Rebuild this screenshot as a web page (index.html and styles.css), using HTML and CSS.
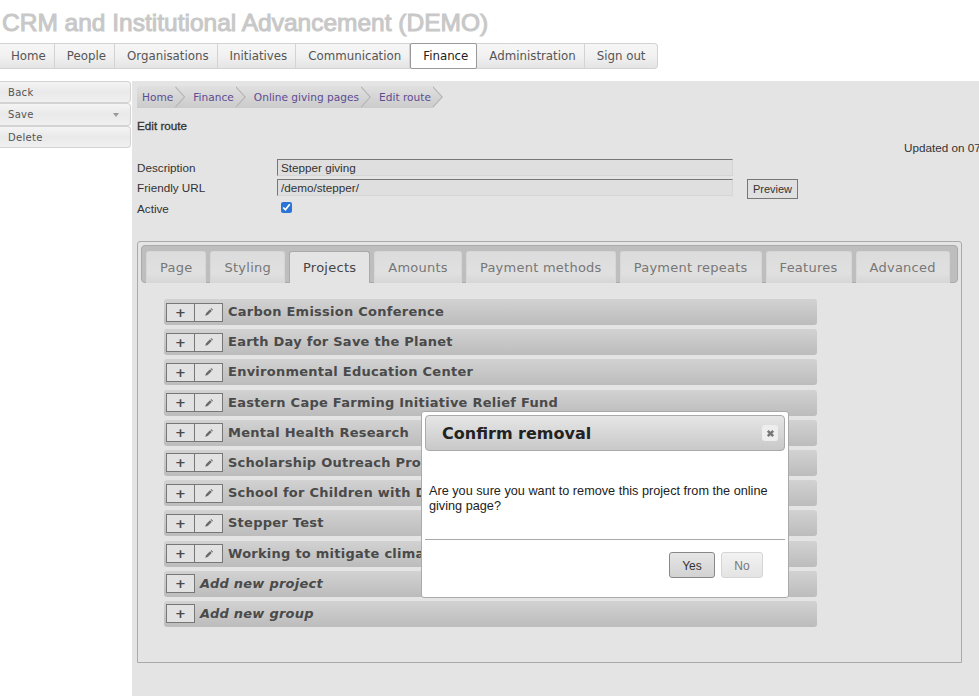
FILE: index.html
```html
<!DOCTYPE html>
<html>
	<head>
		<meta charset="utf-8">
		<title>CRM and Institutional Advancement (DEMO)</title>
		<link rel="stylesheet" href="styles.css">
	</head>
	<body>
		<svg class="defs">
			<symbol id="pen" viewBox="0 0 12 12"><path d="M1.500 10.500l.9-3 4.800-4.800 2.100 2.100-4.800 4.800zM7.900 2l.8-.8 2.100 2.100-.8.8z"/></symbol>
		</svg>
		<header class="top">
			<h1>CRM and Institutional Advancement (DEMO)</h1>
			<nav class="menu">
				<a href="#">Home</a><a href="#">People</a><a href="#">Organisations</a><a href="#">Initiatives</a><a href="#">Communication</a><a href="#" class="on">Finance</a><a href="#">Administration</a><a href="#">Sign out</a>
			</nav>
		</header>
		<div class="wrap">
			<aside class="side">
				<a href="#">Back</a>
				<a href="#">Save<span class="arrow"></span></a>
				<a href="#">Delete</a>
			</aside>
			<main class="main">
				<div class="crumbs">
					<a href="#">Home</a><a href="#">Finance</a><a href="#">Online giving pages</a><a href="#">Edit route</a>
				</div>
				<h2>Edit route</h2>
				<div class="updated">Updated on 07/03/2021</div>
				<form class="fields">
					<label>Description</label>
					<input type="text" value="Stepper giving">
					<span></span>
					<label>Friendly URL</label>
					<input type="text" value="/demo/stepper/">
					<button type="button" class="btn_preview">Preview</button>
					<label>Active</label>
					<div><input type="checkbox" class="check" checked></div>
					<span></span>
				</form>
				<section class="panel">
					<div class="tabs">
						<a href="#">Page</a><a href="#">Styling</a><a href="#" class="on">Projects</a><a href="#">Amounts</a><a href="#">Payment methods</a><a href="#">Payment repeats</a><a href="#">Features</a><a href="#">Advanced</a>
					</div>
					<div class="rows">
						<div class="row"><span class="tool">+</span><span class="tool pen"><svg><use href="#pen"/></svg></span><b>Carbon Emission Conference</b></div>
						<div class="row"><span class="tool">+</span><span class="tool pen"><svg><use href="#pen"/></svg></span><b>Earth Day for Save the Planet</b></div>
						<div class="row"><span class="tool">+</span><span class="tool pen"><svg><use href="#pen"/></svg></span><b>Environmental Education Center</b></div>
						<div class="row"><span class="tool">+</span><span class="tool pen"><svg><use href="#pen"/></svg></span><b>Eastern Cape Farming Initiative Relief Fund</b></div>
						<div class="row"><span class="tool">+</span><span class="tool pen"><svg><use href="#pen"/></svg></span><b>Mental Health Research</b></div>
						<div class="row"><span class="tool">+</span><span class="tool pen"><svg><use href="#pen"/></svg></span><b>Scholarship Outreach Program</b></div>
						<div class="row"><span class="tool">+</span><span class="tool pen"><svg><use href="#pen"/></svg></span><b>School for Children with Disabilities</b></div>
						<div class="row"><span class="tool">+</span><span class="tool pen"><svg><use href="#pen"/></svg></span><b>Stepper Test</b></div>
						<div class="row"><span class="tool">+</span><span class="tool pen"><svg><use href="#pen"/></svg></span><b>Working to mitigate climate change</b></div>
						<div class="row"><span class="tool">+</span><b><i>Add new project</i></b></div>
						<div class="row"><span class="tool">+</span><b><i>Add new group</i></b></div>
					</div>
				</section>
			</main>
		</div>
		<div class="dialog">
			<div class="dialog_head">
				<span>Confirm removal</span>
				<a href="#" class="close">
					<svg viewBox="0 0 10 10"><path d="M1 3l2-2 2 2 2-2 2 2-2 2 2 2-2 2-2-2-2 2-2-2 2-2z"/></svg>
				</a>
			</div>
			<p>Are you sure you want to remove this project from the online giving page?</p>
			<div class="dialog_foot">
				<button type="button" class="yes">Yes</button>
				<button type="button" class="no">No</button>
			</div>
		</div>
	</body>
</html>
```

FILE: styles.css
```css
html, body {
    margin: 0;
    height: 100%;
}
body {
    position: relative;
    overflow: hidden;
    background: #fff;
    font-family: "Liberation Sans", Arial, sans-serif;
    font-size: 11.700px;
    color: #333;
}
a {
    text-decoration: none;
    color: inherit;
}
.defs {
    display: none;
}
.top {
    height: 81px;
    box-sizing: border-box;
    padding-top: 8px;
}
h1 {
    margin: 0 0 0 2px;
    height: 35px;
    font-size: 24.500px;
    line-height: 30px;
    font-weight: normal;
    color: #c8c8c8;
    -webkit-text-stroke: 1px #c8c8c8;
    white-space: nowrap;
}
.menu {
    display: inline-flex;
    height: 24px;
    border: 1px solid #d3d3d3;
    border-left: 0;
    border-radius: 0 4px 4px 0;
    background: linear-gradient(#f6f6f6, #f1f1f1 50%, #e4e4e4);
    font-family: "DejaVu Sans", sans-serif;
    font-size: 11.800px;
    line-height: 25px;
    color: #555;
}
.menu a {
    padding: 0 8px 0 12px;
    border-right: 1px solid #d3d3d3;
}
.menu a:first-child {
    padding-left: 11px;
}
.menu a:last-child {
    padding-right: 11px;
    border-right: 0;
}
.menu a.on {
    box-sizing: border-box;
    height: 26px;
    margin: -1px 0;
    background: #fff;
    border: 1px solid #999;
    border-radius: 2px;
    color: #222;
}
.wrap {
    display: flex;
    height: 615px;
}
.side {
    width: 131px;
    flex: none;
    font-family: "DejaVu Sans", sans-serif;
    font-size: 10px;
    letter-spacing: .3px;
    color: #555;
}
.side a {
    display: block;
    position: relative;
    box-sizing: border-box;
    height: 22.300px;
    padding-left: 8px;
    line-height: 21px;
    border: 1px solid #d3d3d3;
    border-left: 0;
    border-radius: 0 4px 4px 0;
    background: linear-gradient(#f4f4f4, #e9e9e9 50%, #f0f0f0);
}
.arrow {
    position: absolute;
    right: 11px;
    top: 9px;
    border: 3.500px solid transparent;
    border-top: 4px solid #999;
    border-bottom: 0;
}
.main {
    flex: 1;
    margin-left: 1px;
    padding: 5px 0 0 5px;
    background: #e4e4e4;
    min-width: 0;
    overflow: hidden;
}
.crumbs {
    display: flex;
    height: 22px;
    font-family: "DejaVu Sans", sans-serif;
    font-size: 10.600px;
    line-height: 23px;
    color: #5d4c94;
}
.crumbs a {
    position: relative;
    padding: 0 2px 0 18px;
    background: linear-gradient(#e0e0e0, #cbcbcb);
}
.crumbs a:first-child {
    padding-left: 5px;
}
.crumbs a:before, .crumbs a:after {
    content: "";
    position: absolute;
    z-index: 1;
    top: 0;
    width: 10px;
    height: 22px;
    clip-path: polygon(0 0, 100% 50%, 0 100%);
}
.crumbs a:before {
    left: 100%;
    background: #b4b4b4;
}
.crumbs a:after {
    left: calc(100% - 1.500px);
    background: linear-gradient(#e0e0e0, #cbcbcb);
}
h2 {
    margin: 10px 0 0;
    height: 23px;
    font-size: 11.700px;
    line-height: 16px;
    font-weight: normal;
    -webkit-text-stroke: .3px #333;
}
.updated {
    margin-left: 767px;
    height: 18px;
    line-height: 14px;
    white-space: nowrap;
}
.fields {
    display: grid;
    grid-template-columns: 140px 456px auto;
    grid-template-rows: 20px 21px 20px;
    align-items: start;
}
.fields label {
    margin-top: 1px;
    line-height: 16px;
}
.fields input[type=text] {
    box-sizing: border-box;
    width: 456px;
    height: 16.500px;
    padding: 0 3px;
    border: 1px solid #d5d5d5;
    border-top-color: #777;
    border-left-color: #777;
    background: #dfdfdf;
    font: 11.700px "Liberation Sans", Arial, sans-serif;
    color: #333;
}
.check {
    margin: 2px 0 0 4px;
    width: 11px;
    height: 11px;
    accent-color: #2a74d8;
}
.btn_preview {
    margin-left: 14px;
    width: 51px;
    height: 20px;
    padding: 0;
    border: 1px solid #777;
    background: #e0e0e0;
    font: 11px "Liberation Sans", Arial, sans-serif;
    color: #333;
}
.panel {
    box-sizing: border-box;
    width: 825px;
    height: 422px;
    margin-top: 21px;
    padding: 3px;
    border: 1px solid #aaa;
    border-radius: 3px 3px 0 0;
}
.tabs {
    display: flex;
    gap: 4px;
    height: 38px;
    box-sizing: border-box;
    padding: 5px 0 0 4px;
    border: 1px solid #aaa;
    border-radius: 4px;
    background: #bebebe;
    font-family: "DejaVu Sans", sans-serif;
    font-size: 13px;
    letter-spacing: .25px;
    color: #777;
}
.tabs a {
    box-sizing: border-box;
    height: 32px;
    padding: 0 13px;
    line-height: 32px;
    white-space: nowrap;
    border: 1px solid #d6d6d6;
    border-bottom: 0;
    border-radius: 3px 3px 0 0;
    background: linear-gradient(#dcdcdc, #e0e0e0 70%, #d6d6d6);
}
.tabs a.on {
    background: #e4e4e4;
    border-color: #aaa;
    color: #444;
}
.rows {
    display: flex;
    flex-direction: column;
    gap: 4.200px;
    width: 653px;
    margin: 16px 0 0 23px;
}
.row {
    display: flex;
    align-items: center;
    height: 26px;
    padding-left: 2px;
    border-radius: 3px;
    background: linear-gradient(#d2d2d2, #bcbcbc);
    font-family: "DejaVu Sans", sans-serif;
    font-size: 13px;
    letter-spacing: .25px;
    color: #4a4a4a;
}
.row b {
    margin: 0 0 1px 5px;
    white-space: nowrap;
}
.tool {
    box-sizing: border-box;
    display: flex;
    align-items: center;
    justify-content: center;
    width: 29px;
    height: 19px;
    border: 1px solid #777;
    background: #e2e2e2;
    font-size: 13px;
    font-weight: bold;
    letter-spacing: 0;
}
.pen {
    margin-left: -1px;
}
.pen svg {
    width: 10px;
    height: 10px;
    fill: #6a6a6a;
}
.dialog {
    position: absolute;
    left: 421px;
    top: 411px;
    box-sizing: border-box;
    width: 368px;
    height: 187px;
    padding: 3px;
    background: #fff;
    border: 1px solid #aaa;
    border-radius: 3px;
}
.dialog_head {
    display: flex;
    align-items: center;
    justify-content: space-between;
    box-sizing: border-box;
    height: 36px;
    padding: 0 6px 0 16px;
    border: 1px solid #aaa;
    border-radius: 4px;
    background: linear-gradient(#e6e6e6, #c8c8c8);
    font-family: "DejaVu Sans", sans-serif;
    font-size: 16px;
    font-weight: bold;
    color: #222;
}
.close {
    display: flex;
    align-items: center;
    justify-content: center;
    width: 16px;
    height: 16px;
    border-radius: 3px;
    background: #eee;
}
.close svg {
    width: 9px;
    height: 9px;
    fill: #777;
}
.dialog p {
    margin: 33px 0 0 4px;
    height: 55px;
    font-size: 12.700px;
    line-height: 15px;
    color: #222;
}
.dialog_foot {
    display: flex;
    justify-content: flex-end;
    gap: 6px;
    padding: 12px 22px 0 0;
    border-top: 1px solid #aaa;
}
.dialog_foot button {
    box-sizing: border-box;
    height: 26px;
    border-radius: 3px;
    font: 12px "Liberation Sans", Arial, sans-serif;
    padding: 1px 0 0;
}
.yes {
    width: 46px;
    border: 1px solid #888;
    background: linear-gradient(#e6e6e6, #d2d2d2);
    color: #333;
}
.no {
    width: 42px;
    border: 1px solid #d5d5d5;
    background: linear-gradient(#f2f2f2, #e4e4e4);
    color: #777;
}
```
